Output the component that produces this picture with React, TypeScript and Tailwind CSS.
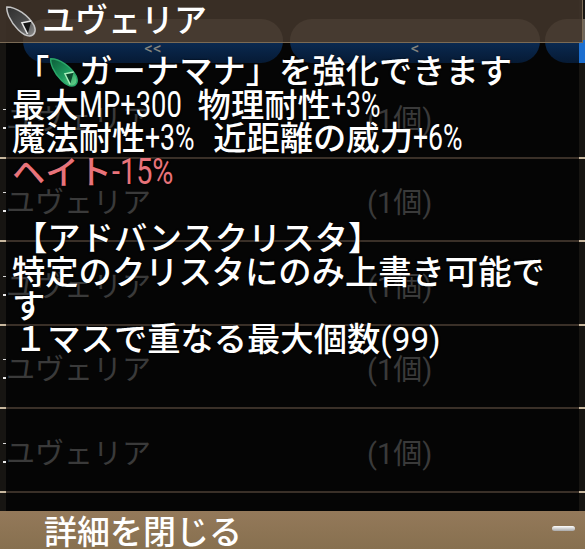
import React from "react";

const FONT = "font-['Roboto','Noto_Sans_CJK_JP',sans-serif]";
const BTN = "h-[44px] rounded-[22px] flex justify-center items-end text-[#85857f] text-[17px] leading-[20px] pb-[5px] bg-[linear-gradient(#6e665b_0,#6e665b_52%,#0a2a52_52%,#061a34_100%)]";

function Crystal({ green, size }: { green?: boolean; size: number }) {
  const id = green ? "cg" : "cs";
  return (
    <svg width={size} height={size} viewBox="0 0 34 34" className="shrink-0">
      <defs>
        <linearGradient id={id} x1="0" y1="0" x2="1" y2="1">
          <stop offset="0" stopColor={green ? "#0d5c38" : "#2e2e2e"} />
          <stop offset="0.55" stopColor={green ? "#1c9a5e" : "#4a4a4a"} />
          <stop offset="1" stopColor={green ? "#6fd88e" : "#8f8f8f"} />
        </linearGradient>
      </defs>
      <path d="M2 2 C12 2 25 11 31 22 C33.5 28 31 32.5 26 33 C19 33 9 23 4 12 C2.5 8 1.5 5 2 2 Z" fill={`url(#${id})`} stroke={green ? "#2aa86a" : "#c4c4c4"} strokeWidth="1.6" />
      <path d="M24 31 L18 19 L28 17" fill={green ? "#0c4a2e" : "#141414"} stroke={green ? "#a5efbb" : "#e6e6e6"} strokeWidth="1.6" />
    </svg>
  );
}

function Narrow({ w, k, children }: { w: number; k: string; children: React.ReactNode }) {
  return (
    <span className="inline-block whitespace-nowrap font-normal text-[36px]" style={{ width: w }}>
      <span className={`inline-block origin-left ${k}`}>{children}</span>
    </span>
  );
}

function Row() {
  return (
    <div className="flex h-[83.5px]">
      <div className="w-[6px] flex flex-col items-end justify-end">
        <span className="w-[3px] h-[1px] bg-[#d8d8d8]" />
        <span className="w-[3px] h-[2px] mt-[17px] mb-[28px] bg-[#e8e8e8]" />
        <span className="w-[6px] h-[2px] bg-[#c8b79e]" />
      </div>
      <div className="flex-1 bg-[#050505] border-b-2 border-[#3a3028] flex items-end pb-[19px] text-[#3a3a3a] text-[29px] leading-[36px]">
        <span className="w-[361px]">ユヴェリア</span>
        <span>(1個)</span>
      </div>
      <div className="w-[6px] flex flex-col justify-end">
        <span className="h-[2px] bg-[#c8b79e]" />
      </div>
    </div>
  );
}

export default function App() {
  return (
    <div className={`${FONT} relative w-[585px] h-[549px] overflow-hidden bg-[#171512]`}>
      {/* list */}
      <div className="h-[511px] flex flex-col">
        <div className="mx-[6px] h-[75px] bg-[#050505]" />
        <Row />
        <Row />
        <Row />
        <Row />
        <Row />
        <div className="mx-[6px] flex-1 bg-[#050505]" />
      </div>
      <div className="h-[38px] bg-gradient-to-b from-[#94795a] to-[#87704f] flex items-center pl-[44px] pr-[10px] justify-between">
        <span className="text-white font-medium text-[33px] leading-[38px] translate-y-[3px] whitespace-nowrap">詳細を閉じる</span>
        <span className="w-[23px] h-[5px] rounded-sm bg-gradient-to-b from-white to-[#a9a9a9] -translate-y-[2px]" />
      </div>

      {/* buttons row behind the header */}
      <div className="absolute inset-x-0 top-[19px] flex gap-[5px] pl-[23px]">
        <div className={`${BTN} w-[260px] mr-[2px]`}>&lt;&lt;</div>
        <div className={`${BTN} w-[250px]`}>&lt;</div>
        <div className={`${BTN} flex-1 rounded-r-none justify-end`}>
          <span className="w-[6px] h-[23px] -mb-[5px] bg-[#1c6fd0]" />
        </div>
      </div>

      {/* header */}
      <div className="absolute left-0 top-0 w-[583px] h-[43px] bg-[#41342a]/[0.88] border-b border-r border-[#7a6a55] flex items-center pl-[5px] gap-[5px]">
        <Crystal size={32} />
        <span className="text-white font-medium text-[33px] leading-[40px] whitespace-nowrap">ユヴェリア</span>
      </div>

      {/* detail text over the list */}
      <div className="absolute left-[12px] top-[55px] text-white font-medium text-[33.3px] leading-[33.6px] w-[540px] [text-shadow:0_0_2px_#000]">
        <div className="flex items-center pl-[4px] whitespace-nowrap">
          <span>「</span>
          <Crystal green size={30} />
          <span>ガーナマナ」を強化できます</span>
        </div>
        <div className="whitespace-nowrap flex gap-[19px]">
          <span>最大<Narrow w={100} k="scale-x-[0.76]">MP+300</Narrow></span>
          <span>物理耐性<Narrow w={50} k="scale-x-[0.74]">+3%</Narrow></span>
        </div>
        <div className="whitespace-nowrap flex gap-[18px]">
          <span>魔法耐性<Narrow w={50} k="scale-x-[0.74]">+3%</Narrow></span>
          <span>近距離の威力<Narrow w={50} k="scale-x-[0.74]">+6%</Narrow></span>
        </div>
        <div className="text-[#e8737a] whitespace-nowrap">
          ヘイト<Narrow w={64} k="scale-x-[0.8]">-15%</Narrow>
        </div>
        <div className="h-[33px]" />
        <div className="whitespace-nowrap pl-[2px]">【アドバンスクリスタ】</div>
        <div>特定のクリスタにのみ上書き可能です</div>
        <div className="whitespace-nowrap pl-[2px]">１マスで重なる最大個数<span className="font-normal">(99)</span></div>
      </div>
    </div>
  );
}
